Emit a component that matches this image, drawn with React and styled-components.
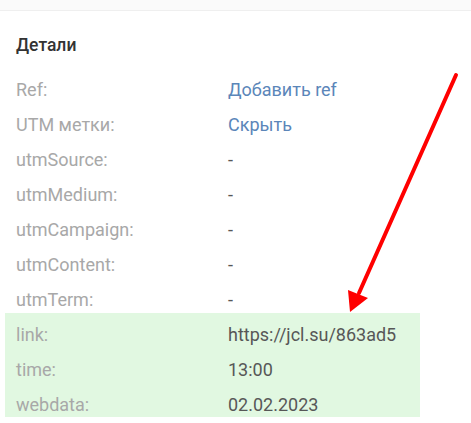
import React from 'react'
import styled, { createGlobalStyle } from 'styled-components'

const Global = createGlobalStyle`
body {
  margin: 0;
  background: #fff;
  font-family: Roboto, "Noto Sans", sans-serif;
}
`

const Page = styled.div`
position: relative;
width: 471px;
height: 423px;
overflow: hidden;
`

const TopBand = styled.div`
height: 10px;
background: #fafafa;
border-bottom: 1px solid #efefef;
`

const Section = styled.div`
padding: 24px 0 0 16px;
`

const Title = styled.div`
font-size: 17.5px;
font-weight: 500;
line-height: 20px;
color: #333;
margin-bottom: 17px;
`

const Row = styled.div`
display: grid;
grid-template-columns: 212px 1fr;
height: 35px;
align-items: center;
font-size: 18px;
`

const Label = styled.span`
color: #a8a8a8;
`

const Value = styled.span`
color: ${p => (p.link ? '#5b86b9' : '#575757')};
`

const Highlight = styled.div`
margin: -4px 0 0 -11px;
padding: 4px 0 0 11px;
width: 404px;
height: 100px;
background: #e1f8e1;
`

const Arrow = styled.svg`
position: absolute;
left: 0;
top: 0;
pointer-events: none;
`

const rows = [
  ['Ref:', 'Добавить ref', true],
  ['UTM метки:', 'Скрыть', true],
  ['utmSource:', '-'],
  ['utmMedium:', '-'],
  ['utmCampaign:', '-'],
  ['utmContent:', '-'],
  ['utmTerm:', '-'],
]

const marked = [
  ['link:', 'https://jcl.su/863ad5'],
  ['time:', '13:00'],
  ['webdata:', '02.02.2023'],
]

export default function App() {
  return (
    <Page>
      <Global />
      <TopBand />
      <Section>
        <Title>Детали</Title>
        {rows.map(([l, v, link]) => (
          <Row key={l}>
            <Label>{l}</Label>
            <Value link={link}>{v}</Value>
          </Row>
        ))}
        <Highlight>
          {marked.map(([l, v]) => (
            <Row key={l}>
              <Label>{l}</Label>
              <Value>{v}</Value>
            </Row>
          ))}
        </Highlight>
      </Section>
      <Arrow width="471" height="423" viewBox="0 0 471 423">
        <line x1="456" y1="75" x2="359" y2="293" stroke="#ff0000" strokeWidth="4" strokeLinecap="round" />
        <polygon points="350,312 348,290 368,298" fill="#ff0000" />
      </Arrow>
    </Page>
  )
}
